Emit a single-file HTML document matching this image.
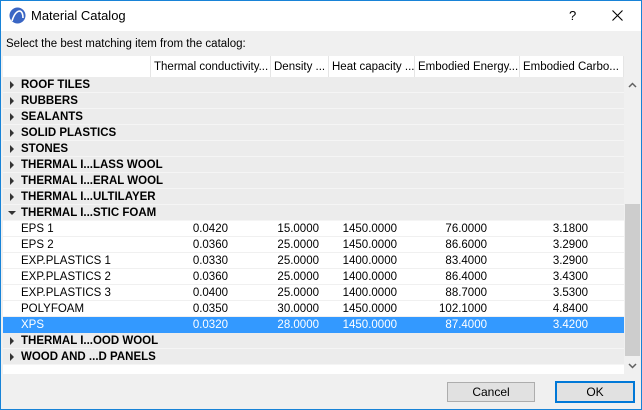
<!DOCTYPE html>
<html><head><style>
*{margin:0;padding:0;box-sizing:border-box}
body{width:642px;height:410px;overflow:hidden;background:#f0f0f0;font-family:"Liberation Sans",sans-serif;font-size:11.5px;color:#000;position:relative}
.win{position:absolute;left:0;top:0;width:642px;height:410px;border:1px solid #1883d7}
.title{position:absolute;left:1px;top:1px;width:640px;height:30px;background:#fff}
.abs{position:absolute;white-space:nowrap}
.tbl{position:absolute;left:3px;top:56px;width:621px;height:318px;background:#fff}
.hdr{position:absolute;top:0;height:21px;line-height:23px;border-left:1px solid #e5e5e5;padding-left:3px;background:#fff;white-space:nowrap}
.row{position:absolute;left:0;width:621px;height:16px;line-height:17px;border-bottom:1px solid #f0f0f0;white-space:nowrap}
.g{background:#ececec;border-bottom:1px solid #f5f5f5;font-weight:bold}
.g span.t{position:absolute;left:18px}
.tri{position:absolute;left:7px;top:4px;width:0;height:0;border-top:4px solid transparent;border-bottom:4px solid transparent;border-left:4px solid #333}
.tri.d{left:5px;top:6px;border-left:4px solid transparent;border-right:4px solid transparent;border-top:4px solid #333;border-bottom:0}
.d span{position:absolute;text-align:right}
.d .n{left:18px;text-align:left}
.sel{background:#3399ff;color:#fff;border-bottom-color:#3399ff}
.btn{position:absolute;height:20px;line-height:19px;text-align:center;background:#e1e1e1;border:1px solid #adadad;font-size:12px}
</style></head><body>
<div class="win"></div>
<div class="title"></div>
<svg class="abs" style="left:9px;top:7px" width="17" height="17" viewBox="0 0 17 17"><circle cx="8.5" cy="8.5" r="8" fill="#3a66c4"/><path d="M3 14 Q6 4 11 4 Q14 5 14 11" stroke="#fff" stroke-width="1.6" fill="none"/></svg>
<div class="abs" style="left:31px;top:8px;font-size:13px">Material Catalog</div>
<div class="abs" style="left:569px;top:8px;font-size:13px">?</div>
<svg class="abs" style="left:612px;top:10px" width="11" height="11"><path d="M0.5 0.5L10.5 10.5M10.5 0.5L0.5 10.5" stroke="#000" stroke-width="1.1"/></svg>
<div class="abs" style="left:6px;top:38px">Select the best matching item from the catalog:</div>
<div class="tbl">
<div class="hdr" style="left:147px;width:120px">Thermal conductivity...</div>
<div class="hdr" style="left:267px;width:58px">Density ...</div>
<div class="hdr" style="left:325px;width:86px">Heat capacity ...</div>
<div class="hdr" style="left:411px;width:105px">Embodied Energy...</div>
<div class="hdr" style="left:516px;width:105px;border-right:1px solid #e5e5e5">Embodied Carbo...</div>

<div class="row g" style="top:21px"><i class="tri"></i><span class="t">ROOF TILES</span></div>
<div class="row g" style="top:37px"><i class="tri"></i><span class="t">RUBBERS</span></div>
<div class="row g" style="top:53px"><i class="tri"></i><span class="t">SEALANTS</span></div>
<div class="row g" style="top:69px"><i class="tri"></i><span class="t">SOLID PLASTICS</span></div>
<div class="row g" style="top:85px"><i class="tri"></i><span class="t">STONES</span></div>
<div class="row g" style="top:101px"><i class="tri"></i><span class="t">THERMAL I...LASS WOOL</span></div>
<div class="row g" style="top:117px"><i class="tri"></i><span class="t">THERMAL I...ERAL WOOL</span></div>
<div class="row g" style="top:133px"><i class="tri"></i><span class="t">THERMAL I...ULTILAYER</span></div>
<div class="row g" style="top:149px"><i class="tri d"></i><span class="t">THERMAL I...STIC FOAM</span></div>

<div class="row d" style="top:165px"><span class="n">EPS 1</span><span style="right:396px">0.0420</span><span style="right:305px">15.0000</span><span style="right:227px">1450.0000</span><span style="right:137px">76.0000</span><span style="right:36px">3.1800</span></div>
<div class="row d" style="top:181px"><span class="n">EPS 2</span><span style="right:396px">0.0360</span><span style="right:305px">25.0000</span><span style="right:227px">1450.0000</span><span style="right:137px">86.6000</span><span style="right:36px">3.2900</span></div>
<div class="row d" style="top:197px"><span class="n">EXP.PLASTICS 1</span><span style="right:396px">0.0330</span><span style="right:305px">25.0000</span><span style="right:227px">1400.0000</span><span style="right:137px">83.4000</span><span style="right:36px">3.2900</span></div>
<div class="row d" style="top:213px"><span class="n">EXP.PLASTICS 2</span><span style="right:396px">0.0360</span><span style="right:305px">25.0000</span><span style="right:227px">1400.0000</span><span style="right:137px">86.4000</span><span style="right:36px">3.4300</span></div>
<div class="row d" style="top:229px"><span class="n">EXP.PLASTICS 3</span><span style="right:396px">0.0400</span><span style="right:305px">25.0000</span><span style="right:227px">1400.0000</span><span style="right:137px">88.7000</span><span style="right:36px">3.5300</span></div>
<div class="row d" style="top:245px"><span class="n">POLYFOAM</span><span style="right:396px">0.0350</span><span style="right:305px">30.0000</span><span style="right:227px">1450.0000</span><span style="right:137px">102.1000</span><span style="right:36px">4.8400</span></div>
<div class="row d sel" style="top:261px"><span class="n">XPS</span><span style="right:396px">0.0320</span><span style="right:305px">28.0000</span><span style="right:227px">1450.0000</span><span style="right:137px">87.4000</span><span style="right:36px">3.4200</span></div>
<div class="row g" style="top:277px"><i class="tri"></i><span class="t">THERMAL I...OOD WOOL</span></div>
<div class="row g" style="top:293px"><i class="tri"></i><span class="t">WOOD AND ...D PANELS</span></div>
</div>
<div class="abs" style="left:624px;top:77px;width:17px;height:297px;background:#f0f0f0"></div>
<div class="abs" style="left:625px;top:204px;width:15px;height:152px;background:#cdcdcd"></div>
<svg class="abs" style="left:628px;top:82px" width="9" height="6"><path d="M1 5L4.5 1.5L8 5" stroke="#606060" stroke-width="1.5" fill="none"/></svg>
<svg class="abs" style="left:628px;top:363px" width="9" height="6"><path d="M1 1L4.5 4.5L8 1" stroke="#606060" stroke-width="1.5" fill="none"/></svg>
<div class="btn" style="left:447px;top:382px;width:88px">Cancel</div>
<div class="btn" style="left:555px;top:381px;width:80px;height:22px;border:2px solid #0078d7;line-height:18px">OK</div>
</body></html>
